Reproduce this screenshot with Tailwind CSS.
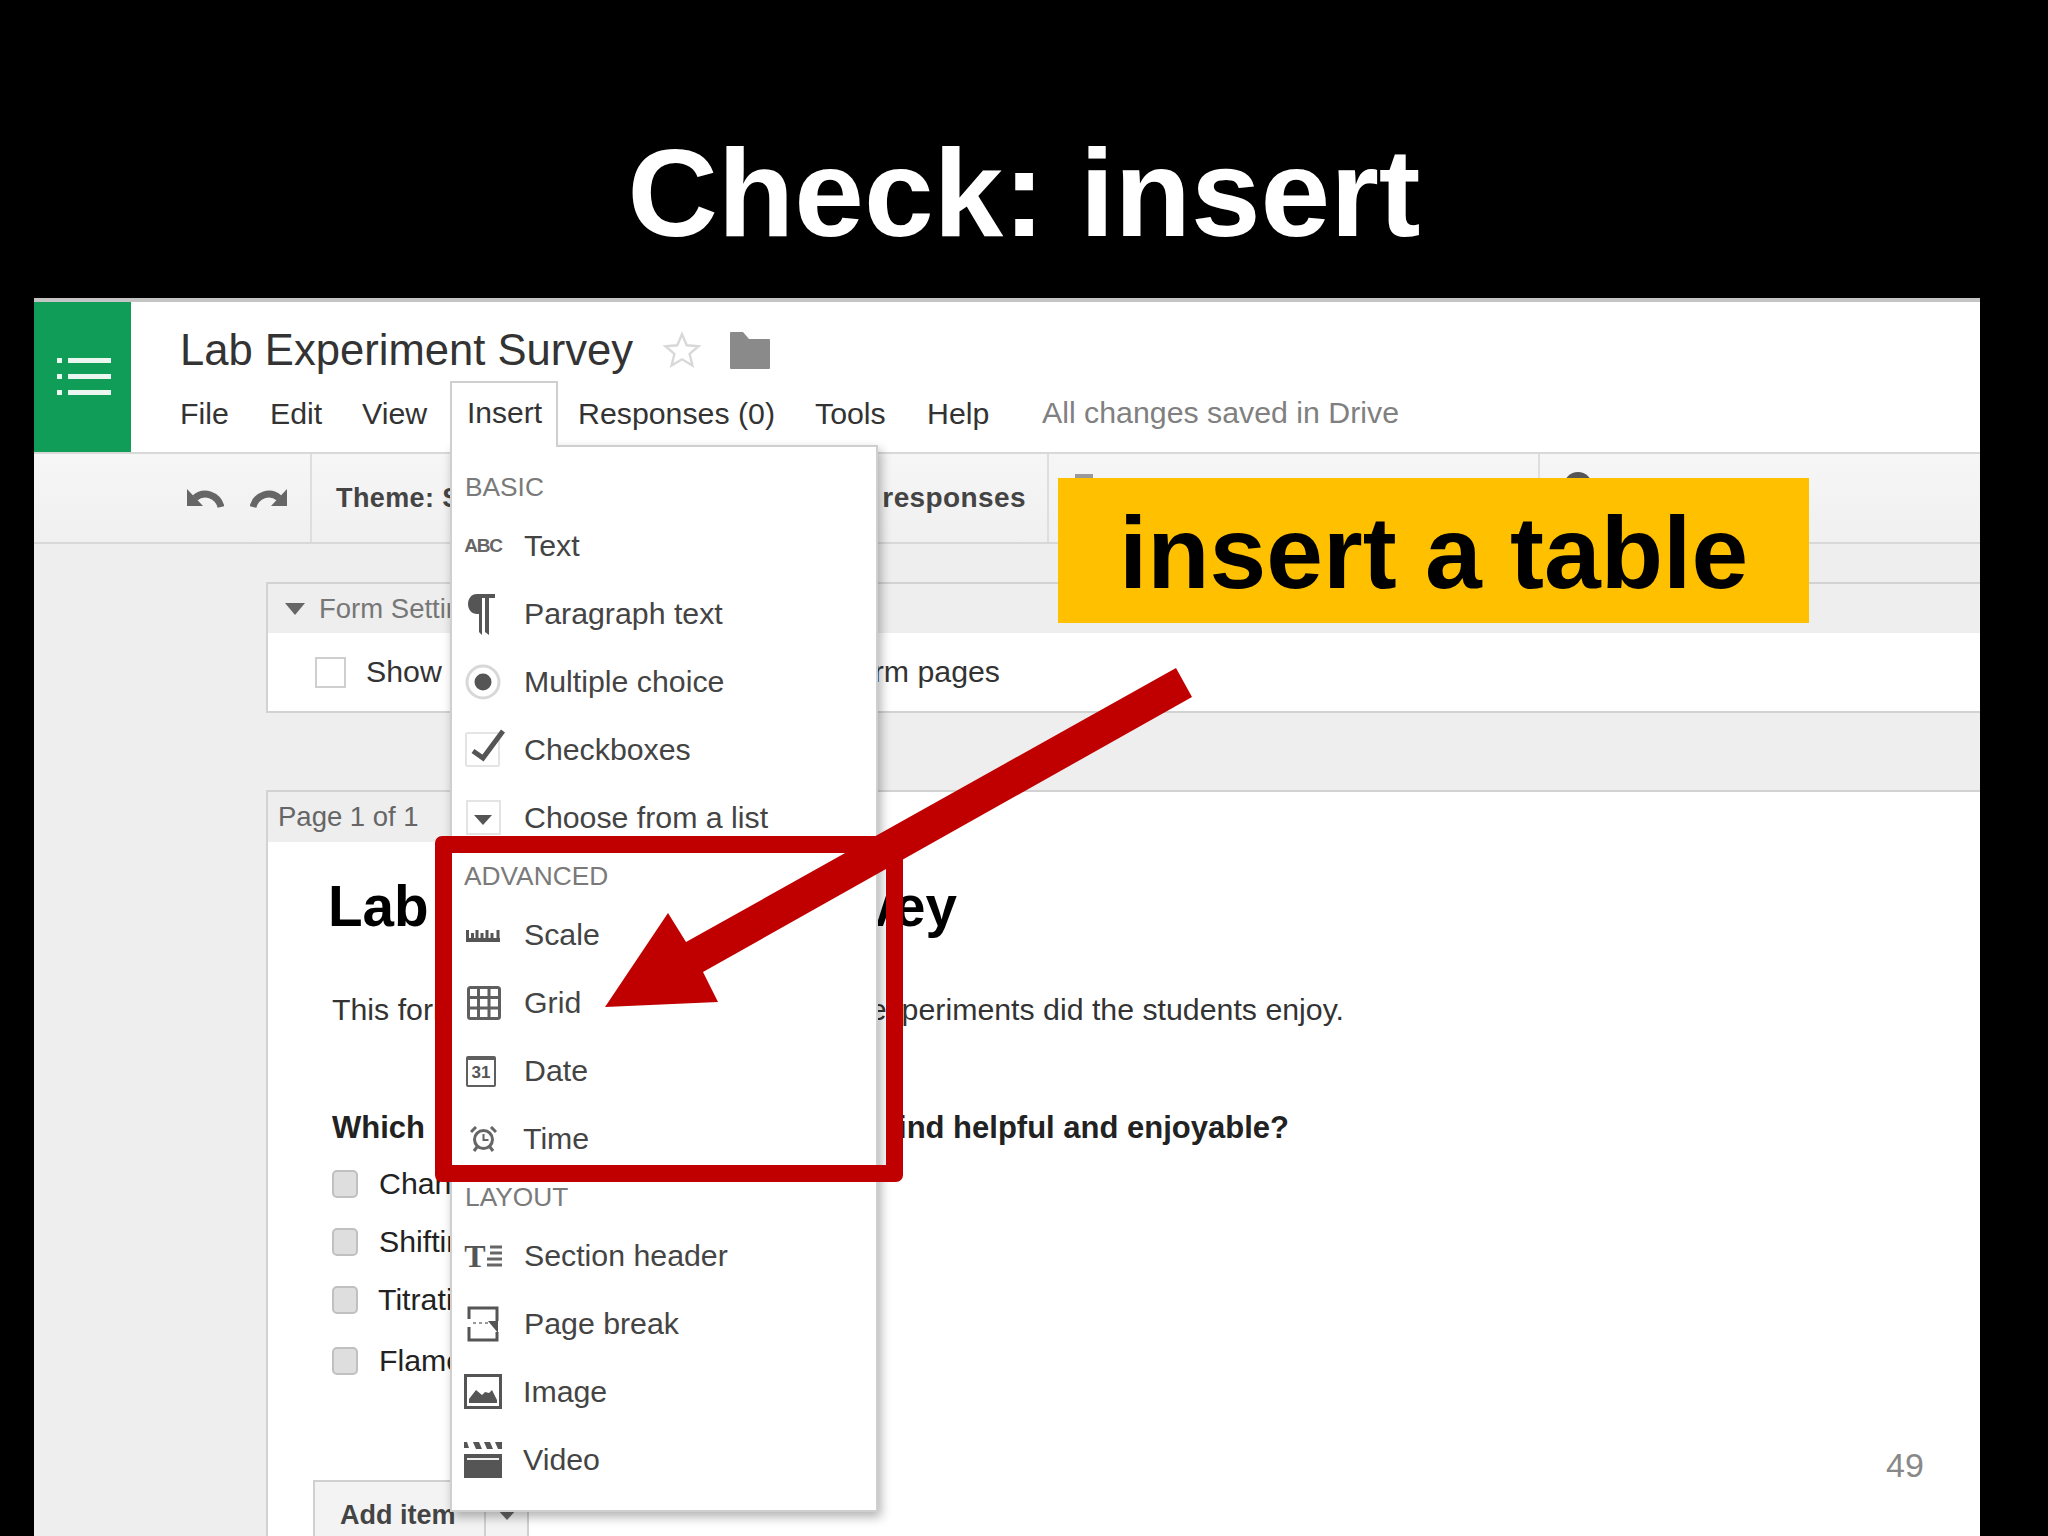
<!DOCTYPE html>
<html><head><meta charset="utf-8"><script src="https://cdn.jsdelivr.net/npm/@tailwindcss/browser@4"></script></head>
<body class="bg-black">
<div class="relative w-[2048px] h-[1536px] bg-black overflow-hidden [font-family:'Liberation_Sans',sans-serif]">
  <div class="h-[298px] flex justify-center pt-[118px]">
    <h1 class="text-[125.200px] leading-[150px] font-bold text-white h-[150px]">Check: insert</h1>
  </div>
  <div class="ml-[34px] w-[1946px] h-[1238px] border-t-4 border-[#c4c4c4] bg-[#eeeeee] flex flex-col">
    <header class="h-[150px] bg-white flex shrink-0">
      <div class="w-[97px] bg-[#0f9d58] flex items-center justify-center pl-[3px] pb-[2px]">
        <svg width="54" height="37" viewBox="0 0 54 37" fill="#eaf6ef"><rect x="0" y="0" width="5" height="5"/><rect x="11" y="0" width="43" height="5"/><rect x="0" y="16" width="5" height="5"/><rect x="11" y="16" width="43" height="5"/><rect x="0" y="32" width="5" height="5"/><rect x="11" y="32" width="43" height="5"/></svg>
      </div>
      <div class="flex-1 pl-[49px] flex flex-col">
        <div class="flex items-center h-[92px] pt-[4px]">
          <span class="text-[43.6px] text-[#333] w-[483px] whitespace-nowrap pt-[2px]">Lab Experiment Survey</span>
          <svg width="38" height="38" viewBox="0 0 24 24" fill="#fff" stroke="#d8d8d8" stroke-width="1.5"><path d="M12 2l3 7 7.500 .6-5.700 4.900 1.800 7.300L12 17.900 5.400 21.800l1.800-7.300L1.500 9.600 9 9z"/></svg>
          <svg class="ml-[29px]" width="40" height="37" viewBox="0 0 40 37" fill="#8a8a8a"><path d="M0 1q0-1 1-1h12l6 7h20q1 0 1 1v28q0 1-1 1H1q-1 0-1-1z"/></svg>
        </div>
        <nav class="flex items-center h-[50px] text-[30.3px] text-[#333] -mt-[5px]">
          <span class="w-[90px]">File</span><span class="w-[92px]">Edit</span><span class="w-[105px]">View</span><span class="w-[111px]"></span><span class="w-[237px] whitespace-nowrap">Responses (0)</span><span class="w-[112px]">Tools</span><span class="w-[115px]">Help</span><span class="text-[#808080] whitespace-nowrap -mt-[2px]">All changes saved in Drive</span>
        </nav>
      </div>
    </header>
    <div class="h-[92px] shrink-0 flex bg-gradient-to-b from-[#f6f6f6] to-[#f0f0f0] border-y-2 border-[#d8d8d8]">
      <div class="w-[278px] border-r-2 border-[#dedede] flex items-center pl-[153px] gap-[26px]">
        <svg width="37" height="22" viewBox="0 0 37 22" fill="none"><path d="M34 20C31 8 17 3 8 11" stroke="#666" stroke-width="7"/><path d="M0 2v17h16z" fill="#666"/></svg>
        <svg width="37" height="22" viewBox="0 0 37 22" fill="none"><path d="M3 20C6 8 20 3 29 11" stroke="#666" stroke-width="7"/><path d="M37 2v17H21z" fill="#666"/></svg>
      </div>
      <div class="w-[737px] border-r-2 border-[#dedede] flex items-center justify-between pl-[24px] pr-[21px] font-bold text-[#444] text-[27px] tracking-[0.4px]"><span>Theme: Simple</span><span class="text-[28px]">View responses</span></div>
      <div class="w-[491px] border-r-2 border-[#dedede] pl-[26px] pt-[20px]"><div class="w-[18px] h-[10px] bg-[#999]"></div></div>
      <div class="flex-1 pl-[24px] pt-[18px]"><div class="w-[28px] h-[28px] rounded-full bg-[#555]"></div></div>
    </div>
    <main class="flex-1 min-h-0 pl-[232px] pt-[38px] flex flex-col text-[30.3px] overflow-hidden">
      <section class="h-[131px] shrink-0 border-2 border-r-0 border-[#d2d2d2] bg-white flex flex-col">
        <div class="h-[49px] bg-[#eeeeee] flex items-center pl-[17px] gap-[14px] text-[27.500px] text-[#777] shrink-0">
          <svg width="20" height="12" viewBox="0 0 20 12" fill="#666"><path d="M0 0h20L10 12z"/></svg><span>Form Settings</span>
        </div>
        <div class="flex-1 flex items-center pl-[47px]">
          <span class="w-[31px] h-[31px] border-2 border-[#cfcfcf] shrink-0"></span>
          <div class="ml-[21px] w-[633px] flex justify-between text-[#333] whitespace-nowrap"><span class="-ml-[1px]">Show</span><span>form pages</span></div>
        </div>
      </section>
      <section class="mt-[77px] flex-1 border-t-2 border-l-2 border-[#d2d2d2] bg-white flex flex-col">
        <div class="h-[50px] w-[300px] bg-[#eeeeee] flex items-center pl-[10px] text-[27.500px] text-[#666] shrink-0">Page 1 of 1</div>
        <div class="pl-[64px]">
          <h2 class="text-[56.600px] font-bold text-black leading-[66px] mt-[32px] -ml-[4px] whitespace-nowrap">Lab Experiment Survey</h2>
          <div class="flex justify-between w-[1012px] text-[#333] whitespace-nowrap mt-[52px] leading-[36px]"><span>This form</span><span>experiments did the students enjoy.</span></div>
          <div class="flex justify-between w-[957px] font-bold text-[31px] text-[#222] whitespace-nowrap mt-[82px] leading-[36px]"><span>Which</span><span>find helpful and enjoyable?</span></div>
          <ul class="mt-[24px] text-[#222]">
            <li class="flex items-center h-[28px] gap-[21px]"><span class="w-[26px] h-[28px] bg-[#dedede] border-2 border-[#c0c0c0] rounded-[5px]"></span><span class="whitespace-nowrap">Changing colors</span></li>
            <li class="flex items-center h-[28px] gap-[21px] mt-[30px]"><span class="w-[26px] h-[28px] bg-[#dedede] border-2 border-[#c0c0c0] rounded-[5px]"></span><span class="whitespace-nowrap">Shifting equilibrium</span></li>
            <li class="flex items-center h-[28px] gap-[20px] mt-[30px]"><span class="w-[26px] h-[28px] bg-[#dedede] border-2 border-[#c0c0c0] rounded-[5px]"></span><span class="whitespace-nowrap">Titration</span></li>
            <li class="flex items-center h-[28px] gap-[21px] mt-[33px]"><span class="w-[26px] h-[28px] bg-[#dedede] border-2 border-[#c0c0c0] rounded-[5px]"></span><span class="whitespace-nowrap">Flame test</span></li>
          </ul>
          <div class="mt-[105px] -ml-[19px] w-[216px] h-[70px] flex border-2 border-b-0 border-[#d0d0d0] bg-[#f3f3f3] font-bold text-[#444] text-[27px]">
            <span class="w-[171px] border-r-2 border-[#d0d0d0] pl-[25px] pt-[16px] leading-[34px] whitespace-nowrap overflow-hidden">Add item</span>
            <span class="flex-1 flex justify-center pt-[27px]"><svg width="20" height="11" viewBox="0 0 20 11" fill="#666"><path d="M0 0h20L10 11z"/></svg></span>
          </div>
        </div>
      </section>
    </main>
  </div>

  <!-- Insert tab and open menu -->
  <div class="absolute left-[450px] top-[381px] w-[108px] h-[66px] z-20 bg-white border-2 border-b-0 border-[#cfcfcf] pl-[15px] pt-[10px] text-[30px] leading-[40px] text-[#333]">Insert</div>
  <div class="absolute left-[450px] top-[445px] w-[428px] h-[1067px] z-10 bg-white border-2 border-[#cfcfcf] pt-[15px] shadow-[3px_5px_10px_rgba(0,0,0,0.3)] text-[30.3px] text-[#444] whitespace-nowrap">
    <div class="h-[50px] flex items-center pl-[13px] text-[26.300px] text-[#7a7a7a] pt-[1px]">BASIC</div>
    <div class="h-[68px] flex items-center pl-[9px]"><span class="w-[44px] flex justify-center font-bold text-[19px] tracking-[-1.3px] text-[#666]">ABC</span><span class="ml-[19px]">Text</span></div>
    <div class="h-[68px] flex items-center pl-[9px]"><span class="w-[44px] flex justify-center -ml-[2px]"><svg width="27" height="41" viewBox="0 0 27 41" fill="#555"><path d="M27 0H9C3 0 0 5 0 10c0 6 4 10 9 10h2v18l3 3V4h3v34l4 3V4h6z"/></svg></span><span class="ml-[21px]">Paragraph text</span></div>
    <div class="h-[68px] flex items-center pl-[9px]"><span class="w-[44px] flex justify-center"><svg width="36" height="36" viewBox="0 0 36 36"><circle cx="18" cy="18" r="16" fill="#fff" stroke="#d8d8d8" stroke-width="3"/><circle cx="18" cy="18" r="8.500" fill="#555"/></svg></span><span class="ml-[19px]">Multiple choice</span></div>
    <div class="h-[68px] flex items-center pl-[9px]"><span class="w-[44px] flex justify-center"><svg width="40" height="40" viewBox="0 0 40 40" fill="none" class="-mt-[6px] ml-[4px]"><rect x="1" y="6" width="33" height="33" rx="1.500" stroke="#e4e4e4" stroke-width="2"/><path d="M8 24l10 7L38 4" stroke="#555" stroke-width="5"/></svg></span><span class="ml-[19px]">Checkboxes</span></div>
    <div class="h-[68px] flex items-center pl-[9px]"><span class="w-[44px] flex justify-center ml-[1px]"><svg width="36" height="36" viewBox="0 0 36 36" fill="none"><rect x="1" y="1" width="33" height="33" stroke="#e4e4e4" stroke-width="2"/><path d="M8 15h18l-9 10z" fill="#555"/></svg></span><span class="ml-[18px]">Choose from a list</span></div>
    <div class="h-[49px] flex items-center pl-[12px] text-[26.300px] text-[#7a7a7a]">ADVANCED</div>
    <div class="h-[68px] flex items-center pl-[9px]"><span class="w-[44px] flex justify-center"><svg width="34" height="14" viewBox="0 0 34 14" fill="none" stroke="#555"><path d="M0 12h34" stroke-width="4"/><path d="M1.500 2v10M6.500 5v6M11 2v9M16 5v6M21 2v9M26 5v6M32 2v10" stroke-width="3"/></svg></span><span class="ml-[19px]">Scale</span></div>
    <div class="h-[68px] flex items-center pl-[9px]"><span class="w-[44px] flex justify-center ml-[1px]"><svg width="34" height="34" viewBox="0 0 34 34" fill="none" stroke="#5f5f5f" stroke-width="3"><rect x="1.500" y="1.500" width="31" height="31" rx="2"/><path d="M1.500 11.500h31M1.500 22h31M11.500 1.500v31M22 1.500v31"/></svg></span><span class="ml-[18px]">Grid</span></div>
    <div class="h-[68px] flex items-center pl-[9px]"><span class="w-[44px] flex justify-center -ml-[2px]"><span class="w-[30px] h-[31px] border-2 border-t-[4px] border-[#5f5f5f] rounded-[2px] flex items-center justify-center text-[17px] font-bold text-[#555] leading-none">31</span></span><span class="ml-[21px]">Date</span></div>
    <div class="h-[68px] flex items-center pl-[9px]"><span class="w-[44px] flex justify-center"><svg width="27" height="26" viewBox="0 0 27 26" fill="none" stroke="#666"><circle cx="13.500" cy="13.500" r="9" stroke-width="3"/><path d="M13.500 8v6h5" stroke-width="2"/><path d="M1 6l5-5M26 6l-5-5M4 25l3-4M23 25l-3-4" stroke-width="3"/></svg></span><span class="ml-[18px]">Time</span></div>
    <div class="h-[49px] flex items-center pl-[13px] text-[26.300px] text-[#7a7a7a]">LAYOUT</div>
    <div class="h-[68px] flex items-center pl-[9px]"><span class="w-[44px] flex justify-center items-center gap-[1px]"><span class="[font-family:'Liberation_Serif',serif] font-bold text-[32px] leading-none text-[#555]">T</span><svg width="15" height="24" viewBox="0 0 15 24" stroke="#666" stroke-width="3"><path d="M3 3h12M3 9h12M0 15h15M0 21h15"/></svg></span><span class="ml-[19px]">Section header</span></div>
    <div class="h-[68px] flex items-center pl-[9px]"><span class="w-[44px] flex justify-center"><svg width="32" height="36" viewBox="0 0 32 36" fill="none" stroke="#555" stroke-width="3"><path d="M2 13V2h28v13M2 21v13h28V26"/><path d="M6 17h3M12 17h3M18 17h3" stroke-width="2" stroke="#999"/><path d="M21 15h10v12z" fill="#555" stroke="none"/></svg></span><span class="ml-[19px]">Page break</span></div>
    <div class="h-[68px] flex items-center pl-[9px]"><span class="w-[44px] flex justify-center"><svg width="38" height="36" viewBox="0 0 38 36" fill="none"><rect x="1.500" y="1.500" width="35" height="32" stroke="#555" stroke-width="3"/><path d="M5 29V25l7-9 6 5 3-3 4 1 3-3 5 10v3z" fill="#555"/></svg></span><span class="ml-[18px]">Image</span></div>
    <div class="h-[68px] flex items-center pl-[9px]"><span class="w-[44px] flex justify-center"><svg width="38" height="36" viewBox="0 0 38 36"><path d="M0 12h38v24H0z" fill="#555"/><path d="M3 17h32" stroke="#eee" stroke-width="2"/><path d="M0 0h3l2 6H0zM9 0h6l3 7h-6zM20 0h6l3 7h-6zM31 0h7v7h-4z" fill="#555"/></svg></span><span class="ml-[18px]">Video</span></div>
  </div>

  <!-- Slide annotations -->
  <div class="absolute z-30 left-[435px] top-[836px] w-[468px] h-[346px] border-[17px] border-[#c00000] rounded-[7px]"></div>
  <svg class="absolute z-30 left-0 top-0" width="2048" height="1536" viewBox="0 0 2048 1536" fill="#c00000"><polygon points="605,1007 668,913 686,942 1176,668 1192,697 703,972 718,1002"/></svg>
  <div class="absolute z-30 left-[1058px] top-[478px] w-[751px] h-[145px] bg-[#ffc000] flex items-center justify-center text-[102px] font-bold text-black leading-none pt-[5px]">insert a table</div>
  <div class="absolute z-30 left-[1886px] top-[1445px] text-[34px] leading-[40px] text-[#898989]">49</div>
</div>
</body></html>
